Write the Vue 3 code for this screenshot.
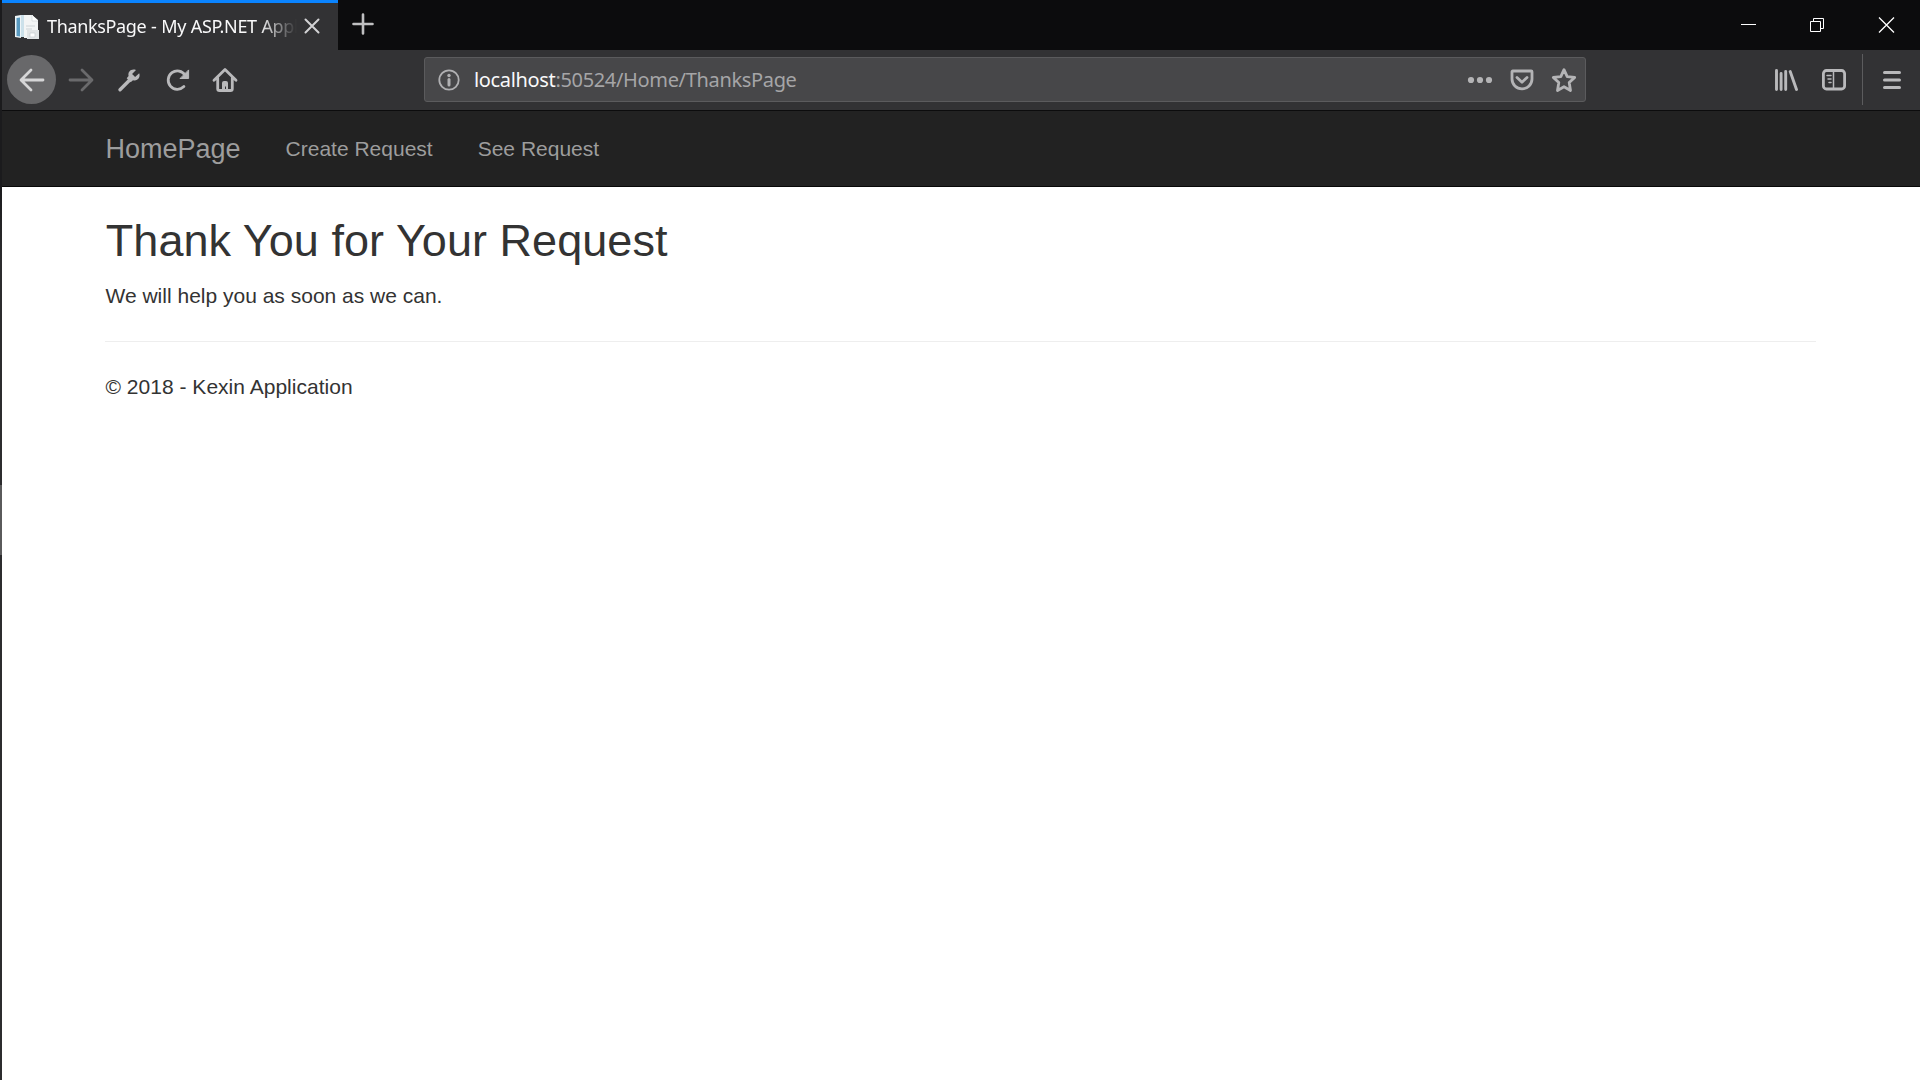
<script setup>
const links = ['Create Request', 'See Request']
</script>

<template>
  <div class="window">
    <div class="edge"><i></i></div>
    <div class="main">
      <header class="titlebar">
        <div class="tab">
          <svg class="favicon" width="26" height="26" viewBox="0 0 26 26">
            <path d="M1 2l6-1v23l-6-1z" fill="#eef5f8" />
            <path d="M2.5 4l3.500-.6v19L2.500 22z" fill="#5999bf" />
            <path d="M7 1h12v22H7z" fill="#cce1ea" />
            <path d="M10 1h8l6 5v18H10z" fill="#f3f5f5" />
            <path d="M18 1v6h6" fill="#fff" stroke="#d1d7d9" stroke-width=".7" />
            <path d="M12 12h9M12 15h6" stroke="#ccd3d6" />
            <path d="M13 16h12v9H13z" fill="#e2e5e6" />
            <path d="M16 19h5v4h-5z" fill="#fff" stroke="#c7cdd0" stroke-width=".7" />
          </svg>
          <span class="title">ThanksPage - My ASP.NET Application</span>
          <svg class="tabclose" width="16" height="16" viewBox="0 0 16 16"><path d="M1.500 1.500l13 13M14.500 1.500l-13 13" stroke="#d2d2d4" stroke-width="2" stroke-linecap="round" /></svg>
        </div>
        <svg class="plus" width="22" height="22" viewBox="0 0 22 22"><path d="M11 1.500v19M1.500 11h19" stroke="#c0c0c1" stroke-width="2.600" stroke-linecap="round" /></svg>
        <div class="controls">
          <svg width="17" height="18" viewBox="0 0 17 18"><path d="M1 8.500h15" stroke="#fff" /></svg>
          <svg width="17" height="18" viewBox="0 0 17 18" fill="none" stroke="#fff"><path d="M1.500 5.500h10v10h-10zM4.500 5.500v-3h10v10h-3" /></svg>
          <svg width="17" height="18" viewBox="0 0 17 18"><path d="M1 1.500l15 15M16 1.500l-15 15" stroke="#fff" stroke-width="1.300" /></svg>
        </div>
      </header>

      <div class="toolbar">
        <div class="buttons">
          <span class="btn back"><svg width="26" height="26" viewBox="0 0 26 26"><path d="M24 13H2.500M12 3L2 13l10 10" /></svg></span>
          <span class="btn dim"><svg width="26" height="26" viewBox="0 0 26 26"><path d="M2 13h21.500M14 3l10 10-10 10" /></svg></span>
          <span class="btn"><svg width="26" height="26" viewBox="0 0 26 26"><path d="M4 22.700L14.200 12.500" stroke-width="3.400" /><path d="M23.200 6.300l-4.100 3.800-3-3L20 3C15.500 1.200 11.500 4.500 12.600 9l-1.900 2.300 4 4 2.300-2.100c4.500 1.200 7.800-2.700 6.200-6.900z" class="fill" /></svg></span>
          <span class="btn"><svg width="26" height="26" viewBox="0 0 26 26"><path d="M18.900 19.600A9.200 9.200 0 1 1 20.200 8.200" /><path d="M23.600 3.300v8.200h-8.200z" class="fill round" /></svg></span>
          <span class="btn home"><svg width="26" height="26" viewBox="0 0 26 26"><path d="M2 13.300L13 2.500l11 10.800M5.700 11v10.700q0 1.800 1.800 1.800h11q1.800 0 1.800-1.800V11" /><path d="M10 23v-7q0-2 2-2h2q2 0 2 2v7h-2v-3.500h-1V23z" class="fill" /></svg></span>
        </div>
        <div class="url">
          <svg width="22" height="22" viewBox="0 0 22 22"><circle cx="11" cy="11" r="9.700" fill="none" stroke="#b0b0b2" stroke-width="1.800" /><circle cx="11" cy="6.500" r="1.700" fill="#b0b0b2" /><path d="M11 10.500v5.500" stroke="#b0b0b2" stroke-width="3" stroke-linecap="round" /></svg>
          <span class="address"><b>localhost</b>:50524/Home/ThanksPage</span>
          <div class="actions">
            <svg width="26" height="26" viewBox="0 0 26 26"><g fill="#b4b4b6"><circle cx="4" cy="13" r="3.100" /><circle cx="13" cy="13" r="3.100" /><circle cx="22" cy="13" r="3.100" /></g></svg>
            <svg width="26" height="26" viewBox="0 0 26 26"><path d="M3.800 4h18.400q.8 0 .8.800V12a10 9.800 0 0 1-20 0V4.800q0-.8.8-.8zM8 10.500l5 4.700 5-4.700" /></svg>
            <svg width="26" height="26" viewBox="0 0 26 26"><path d="M13 2.700l3.200 6.900 7.500.8-5.500 5.200 1.300 7.900L13 19.700l-6.500 3.800 1.300-7.900-5.500-5.200 7.500-.8z" /></svg>
          </div>
        </div>
        <div class="right">
          <svg class="library" width="26" height="26" viewBox="0 0 26 26"><path d="M3.500 3.500v19M8.100 6.500v16M12.700 4.500v18M17.200 4.500l6.300 18" stroke-width="2.900" /></svg>
          <svg class="sidebar" width="26" height="26" viewBox="0 0 26 26"><rect x="2.400" y="3.500" width="21.200" height="18.500" rx="3" /><path d="M12.500 4v18" stroke-width="1.500" /><path d="M6 8.500h4M7 12h3M8 15.500h2" stroke-width="1.500" /></svg>
          <div class="sep"></div>
          <svg class="menu" width="20" height="22" viewBox="0 0 20 22"><path d="M2.500 3.500h15M2.500 11h15M2.500 18.500h15" stroke-width="3" /></svg>
        </div>
      </div>

      <nav class="navbar">
        <a class="brand">HomePage</a>
        <a v-for="link in links" :key="link" class="link">{{ link }}</a>
      </nav>
      <main class="content">
        <h2>Thank You for Your Request</h2>
        <p>We will help you as soon as we can.</p>
        <hr />
        <footer>© 2018 - Kexin Application</footer>
      </main>
    </div>
  </div>
</template>

<style>
body { margin: 0; overflow: hidden; background: #fff; }
</style>

<style scoped>
.window { display: flex; width: 1920px; height: 1080px; background: #fff; overflow: hidden; }
.edge { flex: none; width: 2px; box-sizing: border-box; padding-top: 485px; background: linear-gradient(#1b1b1d 187px, #2c2c2e 260px); }
.edge i { display: block; height: 70px; background: #5a5a5b; }
.main { flex: 1; min-width: 0; display: flex; flex-direction: column; }
svg { display: block; flex: none; }
.titlebar { height: 50px; flex: none; display: flex; background: #0c0c0d; }
.tab { width: 336px; height: 50px; box-sizing: border-box; border-top: 3px solid #0a84ff; background: #323234; display: flex; align-items: center; padding-left: 12px; }
.title { width: 250px; margin-left: 7px; margin-top: -2px; overflow: hidden; white-space: nowrap; font: 18px/30px "Noto Sans", "Open Sans", sans-serif; letter-spacing: -.35px; word-spacing: .4px; color: #f9f9fa; -webkit-mask-image: linear-gradient(90deg, #000 212px, transparent 250px); mask-image: linear-gradient(90deg, #000 212px, transparent 250px); }
.tabclose { margin-left: 7px; margin-top: -1px; }
.plus { margin: 13px 0 0 14px; }
.controls { margin: 16px 25px 0 auto; display: flex; gap: 52px; }
.toolbar { height: 61px; flex: none; box-sizing: border-box; border-bottom: 1px solid #0c0c0d; padding-bottom: 1px; background: #323234; display: flex; align-items: center; }
.toolbar svg { fill: none; stroke: #b9b9bb; stroke-width: 2.8; stroke-linecap: round; stroke-linejoin: round; }
.toolbar svg .fill { fill: #b9b9bb; stroke: none; }
.toolbar svg .round { stroke: #b9b9bb; stroke-width: 1; }
.buttons { display: flex; align-items: center; width: 422px; padding-left: 5px; box-sizing: border-box; }
.btn { width: 48.600px; height: 49px; display: flex; align-items: center; justify-content: center; }
.back { width: 49px; margin-right: .4px; border-radius: 50%; background: #68686a; }
.home { margin-left: -1.500px; }
.back svg { stroke: #d6d6d7; }
.dim svg { stroke: #6a6a6c; }
.url { width: 1162px; height: 45px; box-sizing: border-box; border: 1px solid #5b5b5d; border-radius: 3px; background: #474749; display: flex; align-items: center; padding: 0 8px 0 13px; }
.url > svg { stroke: none; }
.address { margin-left: 14px; font: 20px/30px "Noto Sans", "Open Sans", sans-serif; letter-spacing: -.34px; color: #a5a5a7; white-space: nowrap; }
.address b { font-weight: 400; color: #f9f9fa; }
.actions { display: flex; margin-left: auto; gap: 16px; }
.actions svg { stroke: #b4b4b6; }
.actions svg:first-child { stroke: none; }
.right { display: flex; align-items: center; margin-left: 187px; }
.sidebar { margin-left: 22px; }
.sep { width: 1px; height: 51px; margin: 0 19px 0 15px; background: #5c5c5e; }
.navbar { height: 76px; flex: none; box-sizing: border-box; border-bottom: 1px solid #080808; background: #222; padding-left: 103.500px; display: flex; align-items: center; color: #9d9d9d; font: 21px/30px "Liberation Sans", Arial, sans-serif; }
.brand { font-size: 27px; margin-right: 45px; }
.link { margin-right: 45px; }
.content { margin: 0 104px 0 103px; padding-top: 29px; color: #333; font: 21px/30px "Liberation Sans", Arial, sans-serif; }
h2 { margin: 0 0 15px; padding-left: .8px; font-size: 45px; font-weight: 500; line-height: 50px; letter-spacing: .05px; }
p { margin: 0; padding-left: .5px; }
hr { border: 0; border-top: 1px solid #eee; margin: 30px 0; }
footer { padding-left: .5px; letter-spacing: .02px; }
</style>
